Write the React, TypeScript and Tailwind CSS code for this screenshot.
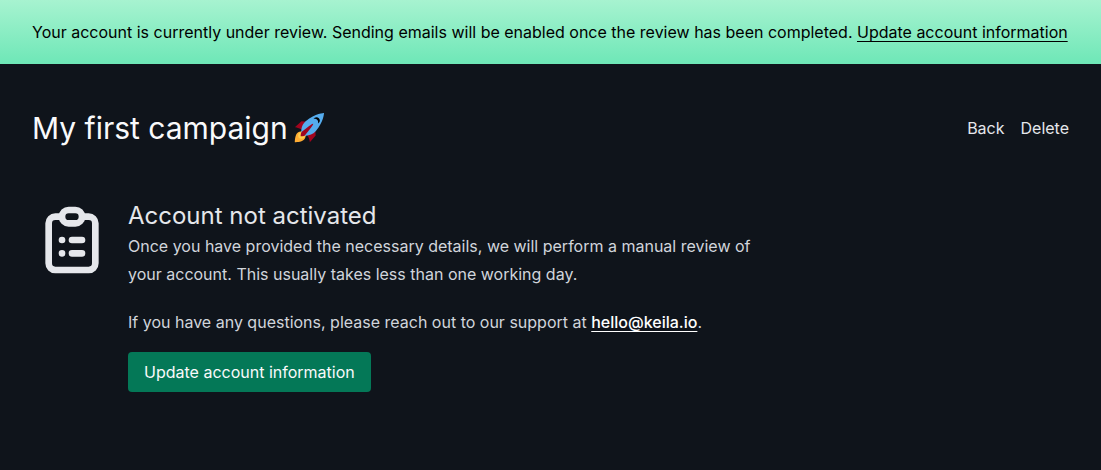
import React from "react";

const RocketIcon: React.FC<{ className?: string }> = ({ className }) => (
  <svg viewBox="0 0 36 36" className={className} role="img" aria-label="rocket">
    <path fill="#A0041E" d="M1 17l8-7 16 1 1 16-7 8s.001-5.999-6-12-12-6-12-6z" />
    <path
      fill="#FFAC33"
      d="M.973 35s-.036-7.979 2.985-11S15 21.187 15 21.187 14.999 29 11.999 32c-3 3-11.026 3-11.026 3z"
    />
    <circle fill="#FFCC4D" cx="8.999" cy="27" r="4" />
    <path
      fill="#55ACEE"
      d="M35.999 0s-10 0-22 10c-6 5-6 14-4 16s11 2 16-4c10-12 10-22 10-22z"
    />
    <path d="M26.999 5c-1.623 0-3.013.971-3.641 2.36.502-.227 1.055-.36 1.641-.36 2.209 0 4 1.791 4 4 0 .586-.133 1.139-.359 1.64 1.389-.627 2.359-2.017 2.359-3.64 0-2.209-1.791-4-4-4z" />
    <path
      fill="#A0041E"
      d="M8 28s0-4 1-5 13.001-10.999 14-10-9.001 13-10.001 14S8 28 8 28z"
    />
  </svg>
);

const ClipboardListIcon: React.FC<{ className?: string }> = ({ className }) => (
  <svg
    viewBox="0 0 24 24"
    fill="none"
    stroke="currentColor"
    strokeWidth={2}
    strokeLinecap="round"
    strokeLinejoin="round"
    className={className}
    aria-hidden="true"
  >
    <path d="M9 5H7a2 2 0 00-2 2v12a2 2 0 002 2h10a2 2 0 002-2V7a2 2 0 00-2-2h-2M9 5a2 2 0 002 2h2a2 2 0 002-2M9 5a2 2 0 012-2h2a2 2 0 012 2m-3 7h3m-3 4h3m-6-4h.01M9 16h.01" />
  </svg>
);

const App: React.FC = () => (
  <div className="min-h-screen bg-[#0f141b] font-['Inter',sans-serif] text-gray-50">
    {/* Review notice */}
    <div className="bg-linear-to-b/srgb from-[#a7f3d0] to-[#6ee7b7] px-8 py-5 text-black">
      Your account is currently under review. Sending emails will be enabled once the review has
      been completed.{" "}
      <a href="#account" className="underline underline-offset-3">
        Update account information
      </a>
    </div>

    <header className="flex items-center justify-between px-8 pt-11">
      <h1 className="flex items-center gap-1.5 text-3xl leading-10 font-normal">
        My first campaign
        <RocketIcon className="size-[30px]" />
      </h1>
      <nav className="flex gap-4 text-[#e5e7eb]">
        <a href="#back">Back</a>
        <button type="button">Delete</button>
      </nav>
    </header>

    <main className="flex gap-4 px-8 pt-13 pb-12">
      <ClipboardListIcon className="size-20 shrink-0 text-[#e5e7eb]" />
      <div className="max-w-[65ch]">
        <h2 className="text-2xl leading-8 font-normal text-[#e5e7eb]">Account not activated</h2>
        <p className="leading-7 text-[#d1d5db]">
          Once you have provided the necessary details, we will perform a manual review of your
          account. This usually takes less than one working day.
        </p>
        <p className="mt-5 leading-7 text-[#d1d5db]">
          If you have any questions, please reach out to our support at{" "}
          <a
            href="mailto:hello@keila.io"
            className="font-medium text-white underline underline-offset-3"
          >
            hello@keila.io
          </a>
          .
        </p>
        <button type="button" className="mt-4 h-10 rounded bg-[#047857] px-4 text-gray-50">
          Update account information
        </button>
      </div>
    </main>
  </div>
);

export default App;
